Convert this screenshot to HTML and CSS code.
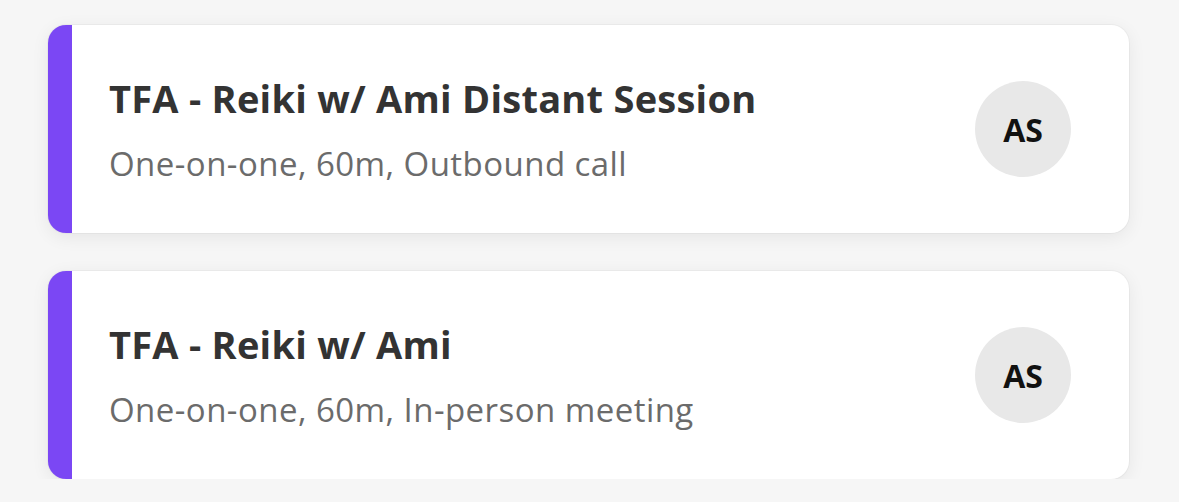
FILE: index.html
```html
<!DOCTYPE html>
<html>
<head>
<meta charset="utf-8">
<link rel="stylesheet" href="styles.css">
</head>
<body>
<div class="list">
  <div class="card">
    <div class="info">
      <div class="title">TFA - Reiki w/ Ami Distant Session</div>
      <div class="sub">One-on-one, 60m, Outbound call</div>
    </div>
    <div class="avatar">AS</div>
  </div>
  <div class="card">
    <div class="info">
      <div class="title">TFA - Reiki w/ Ami</div>
      <div class="sub">One-on-one, 60m, In-person meeting</div>
    </div>
    <div class="avatar">AS</div>
  </div>
</div>
</body>
</html>
```
FILE: styles.css
```css
html, body {
  margin: 0;
  background: #f6f6f6;
  font-family: "Open Sans", Lato, sans-serif;
}
.list {
  display: flex;
  flex-direction: column;
  gap: 38px;
  padding: 25px 50px 0 48px;
}
.card {
  height: 208px;
  box-sizing: border-box;
  background: #fff;
  border-radius: 18px;
  border-left: 24px solid #7b47f4;
  box-shadow: 0 4px 18px rgba(0,0,0,0.07), 0 0 0 1px rgba(0,0,0,0.03);
  display: flex;
  align-items: center;
  padding: 0 58px 0 37px;
}
.info {
  flex: 1;
  display: flex;
  flex-direction: column;
  gap: 22px;
}
.title {
  font-size: 38px;
  line-height: 48px;
  letter-spacing: 0.25px;
  font-weight: 700;
  color: #333;
}
.sub {
  font-size: 33px;
  line-height: 40px;
  letter-spacing: 0.45px;
  color: #6b6b6b;
}
.avatar {
  width: 96px;
  height: 96px;
  border-radius: 50%;
  background: #e8e8e8;
  display: flex;
  align-items: center;
  justify-content: center;
  font-size: 32px;
  font-weight: 700;
  color: #111;
}
```
